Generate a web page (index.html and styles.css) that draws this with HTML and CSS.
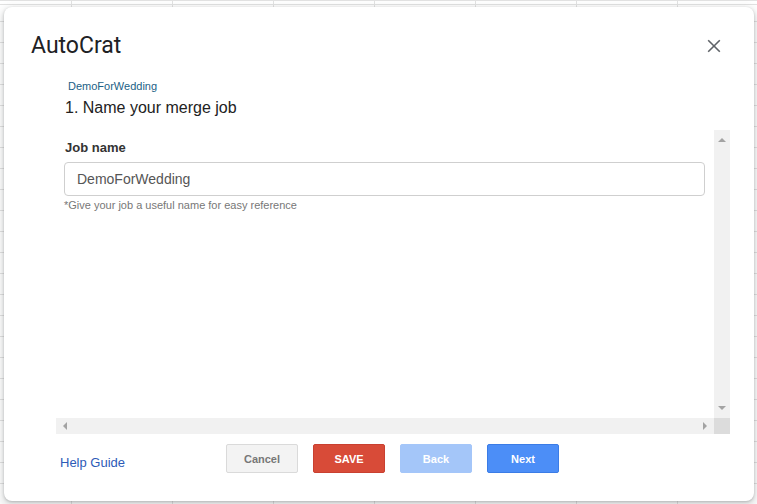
FILE: index.html
```html
<!DOCTYPE html>
<html lang="en">
<head>
  <meta charset="UTF-8" />
  <meta name="viewport" content="width=device-width, initial-scale=1.0" />
  <title>AutoCrat</title>
  <link rel="stylesheet" href="styles.css">
</head>
<body>
  <div class="dialog">
    <div class="dialog-head">
      <span class="dialog-title">AutoCrat</span>
      <button class="close" aria-label="Close">
        <svg width="24" height="24" viewBox="0 0 24 24">
          <path d="M6.2 6.2 L17.8 17.8 M17.8 6.2 L6.2 17.8" stroke="#5f6368" stroke-width="1.6" fill="none" />
        </svg>
      </button>
    </div>

    <div class="frame">
      <div class="job-head">
        <div class="job-tag">DemoForWedding</div>
        <h3>1. Name your merge job</h3>
      </div>

      <div class="scroller">
        <div class="scroll-main">
          <div class="scroll-content">
            <label class="field-label" for="jobName">Job name</label>
            <input type="text" id="jobName" value="DemoForWedding" />
            <div class="hint">*Give your job a useful name for easy reference</div>
          </div>
          <div class="vbar">
            <span class="arrow up"></span>
            <span class="arrow down"></span>
          </div>
        </div>
        <div class="hbar">
          <div class="htrack">
            <span class="arrow left"></span>
            <span class="arrow right"></span>
          </div>
          <div class="corner"></div>
        </div>
      </div>

      <div class="footer">
        <a class="help" href="#">Help Guide</a>
        <div class="buttons">
          <button class="btn cancel">Cancel</button>
          <button class="btn save">SAVE</button>
          <button class="btn back" disabled>Back</button>
          <button class="btn next">Next</button>
        </div>
        <div></div>
      </div>
    </div>
  </div>
</body>
</html>
```

FILE: styles.css
```css
html, body {
  height: 504px;
}
body {
  margin: 0;
  overflow: hidden;
  font-family: Arial, "Liberation Sans", sans-serif;
  background-color: #fff;
  background-image:
    linear-gradient(to bottom, #e2e2e2 1px, transparent 1px),
    linear-gradient(to right, #e2e2e2 1px, transparent 1px),
    linear-gradient(to bottom, #e2e2e2 1px, transparent 1px);
  background-size: 100% 504px, 101px 100%, 100% 21px;
  background-position: 0 4px, 71px 0, 0 0;
  background-repeat: no-repeat, repeat-x, repeat-y;
  padding-top: 7px;
  box-sizing: border-box;
}
.dialog {
  margin-left: 4px;
  width: 750px;
  height: 494px;
  background: #fff;
  border-radius: 8px;
  box-shadow: 0 1px 3px rgba(60,64,67,0.3), 0 4px 8px 3px rgba(60,64,67,0.15);
  display: flex;
  flex-direction: column;
}
.dialog-head {
  display: flex;
  justify-content: space-between;
  align-items: center;
  padding: 25px 28px 0 27px;
  height: 28px;
}
.dialog-title {
  font-family: Roboto, "Open Sans", sans-serif;
  font-size: 23px;
  line-height: 28px;
  color: #202124;
}
.close {
  width: 24px;
  height: 24px;
  padding: 0;
  border: none;
  background: none;
  cursor: pointer;
}
.close svg {
  display: block;
}
.frame {
  margin-left: 52px;
  width: 674px;
}
.job-head {
  padding: 19px 0 0 9px;
}
.job-tag {
  margin-left: 3px;
  font-size: 11px;
  line-height: 14px;
  color: #1c5f86;
}
.job-head h3 {
  margin: 5px 0 0;
  font-size: 16px;
  font-weight: normal;
  line-height: 20px;
  color: #222;
}
.scroller {
  margin-top: 12px;
  height: 304px;
  display: flex;
  flex-direction: column;
}
.scroll-main {
  flex: 1;
  display: flex;
}
.scroll-content {
  flex: 1;
  padding: 10px 9px 0 8px;
}
.field-label {
  display: block;
  margin-left: 1px;
  font-size: 13px;
  font-weight: bold;
  line-height: 16px;
  color: #333;
}
.scroll-content input {
  display: block;
  width: 100%;
  height: 34px;
  margin-top: 6px;
  padding: 0 12px;
  box-sizing: border-box;
  border: 1px solid #cfcfcf;
  border-radius: 4px;
  font-family: Arial, "Liberation Sans", sans-serif;
  font-size: 14px;
  color: #555;
}
.hint {
  margin-top: 2px;
  font-size: 11px;
  line-height: 14px;
  color: #777;
}
.vbar {
  width: 16px;
  background: #f1f1f1;
  display: flex;
  flex-direction: column;
  justify-content: space-between;
  align-items: center;
  padding: 8px 0;
  box-sizing: border-box;
}
.hbar {
  height: 16px;
  display: flex;
}
.htrack {
  flex: 1;
  background: #f1f1f1;
  display: flex;
  justify-content: space-between;
  align-items: center;
  padding: 0 7px;
}
.corner {
  width: 16px;
  background: #dcdcdc;
}
.arrow {
  width: 0;
  height: 0;
  border: 4px solid transparent;
}
.arrow.up {
  border-top: 0;
  border-bottom-color: #a3a3a3;
}
.arrow.down {
  border-bottom: 0;
  border-top-color: #a3a3a3;
}
.arrow.left {
  border-left: 0;
  border-right-color: #a3a3a3;
}
.arrow.right {
  border-right: 0;
  border-left-color: #a3a3a3;
}
.footer {
  margin-top: 10px;
  display: grid;
  grid-template-columns: 1fr auto 1fr;
  align-items: start;
}
.help {
  margin: 11px 0 0 4px;
  font-size: 13px;
  line-height: 16px;
  color: #2d5bb7;
  text-decoration: none;
}
.buttons {
  display: flex;
  gap: 15px;
  margin-left: -1px;
}
.btn {
  width: 72px;
  height: 29px;
  border: 1px solid;
  border-radius: 2px;
  font-family: Arial, "Liberation Sans", sans-serif;
  font-size: 11px;
  font-weight: bold;
  cursor: pointer;
}
.cancel {
  background: #f3f3f3;
  border-color: #dadada;
  color: #777;
}
.save {
  background: #d84b38;
  border-color: #c94030;
  color: #fff;
}
.back {
  background: #a4c6f9;
  border-color: #a4c6f9;
  color: #fff;
  cursor: default;
}
.next {
  background: #4c8ef7;
  border-color: #3b7ce6;
  color: #fff;
}
```
